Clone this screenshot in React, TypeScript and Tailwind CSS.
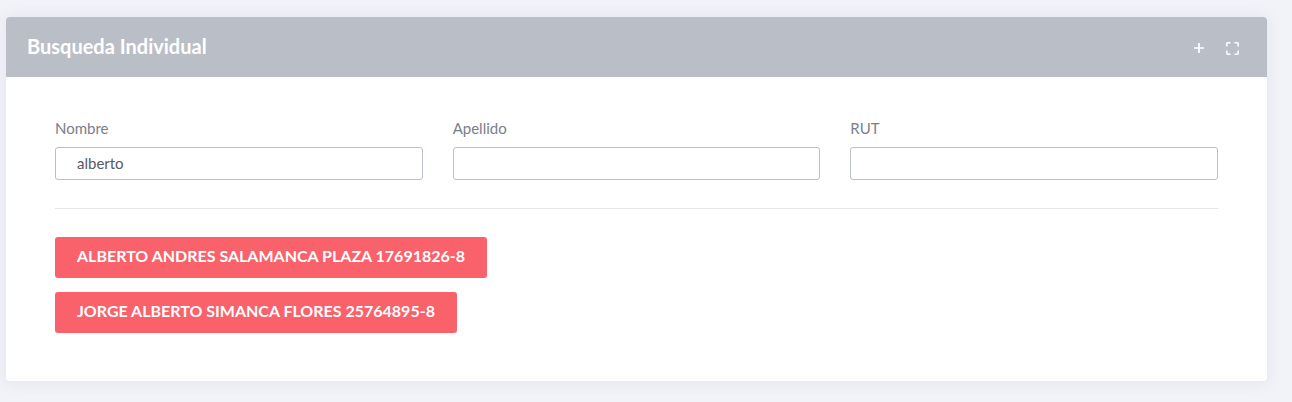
const fields = [
  { id: "nombre", label: "Nombre", value: "alberto" },
  { id: "apellido", label: "Apellido", value: "" },
  { id: "rut", label: "RUT", value: "" },
];

const results = [
  "ALBERTO ANDRES SALAMANCA PLAZA 17691826-8",
  "JORGE ALBERTO SIMANCA FLORES 25764895-8",
];

export default function App() {
  return (
    <main className="min-h-screen bg-[#f2f3f8] pt-[17px] pr-[25px] pb-[21px] pl-1.5 font-['Lato',sans-serif]">
      <section className="rounded bg-white shadow-[0_1px_15px_1px_rgba(81,77,146,0.08)]">
        <header className="flex h-[60px] items-center justify-between rounded-t bg-[#babec7] pr-7 pl-[21px] text-white">
          <h1 className="pb-0.5 text-xl font-bold">Busqueda Individual</h1>
          <div className="flex items-center gap-[21px] pt-0.5">
            <button type="button" aria-label="Expandir" className="block">
              <svg className="size-3" viewBox="0 0 12 12" fill="none" stroke="currentColor" strokeWidth="1.7">
                <path d="M1 6H11M6 1V11" />
              </svg>
            </button>
            <button type="button" aria-label="Pantalla completa" className="block">
              <svg className="size-[13px]" viewBox="0 0 13 13" fill="none" stroke="currentColor" strokeWidth="1.5">
                <path d="M0.8 4.5V1.8Q0.8 0.8 1.8 0.8H4.5M8.5 0.8H11.2Q12.2 0.8 12.2 1.8V4.5M12.2 8.5V11.2Q12.2 12.2 11.2 12.2H8.5M4.5 12.2H1.8Q0.8 12.2 0.8 11.2V8.5" />
              </svg>
            </button>
          </div>
        </header>
        <div className="px-[49px] pt-[41px] pb-12">
          <form className="grid grid-cols-3 gap-[30px]">
            {fields.map((f) => (
              <div key={f.id}>
                <label htmlFor={f.id} className="mb-[9px] block text-[15px] leading-5 text-[#7b7e8a]">
                  {f.label}
                </label>
                <input
                  id={f.id}
                  type="text"
                  defaultValue={f.value}
                  className="block h-[33px] w-full rounded-[3px] border border-[#babec7] bg-white px-[21px] pb-0.5 text-[15px] text-[#575962] outline-none"
                />
              </div>
            ))}
          </form>
          <hr className="my-7 border-[#e5e5e5]" />
          <div className="flex flex-col items-start gap-3.5">
            {results.map((r) => (
              <button
                key={r}
                type="button"
                className="rounded-[3px] bg-[#f9616b] px-[22px] pt-[9px] pb-3 text-base leading-5 font-bold text-white"
              >
                {r}
              </button>
            ))}
          </div>
        </div>
      </section>
    </main>
  );
}
